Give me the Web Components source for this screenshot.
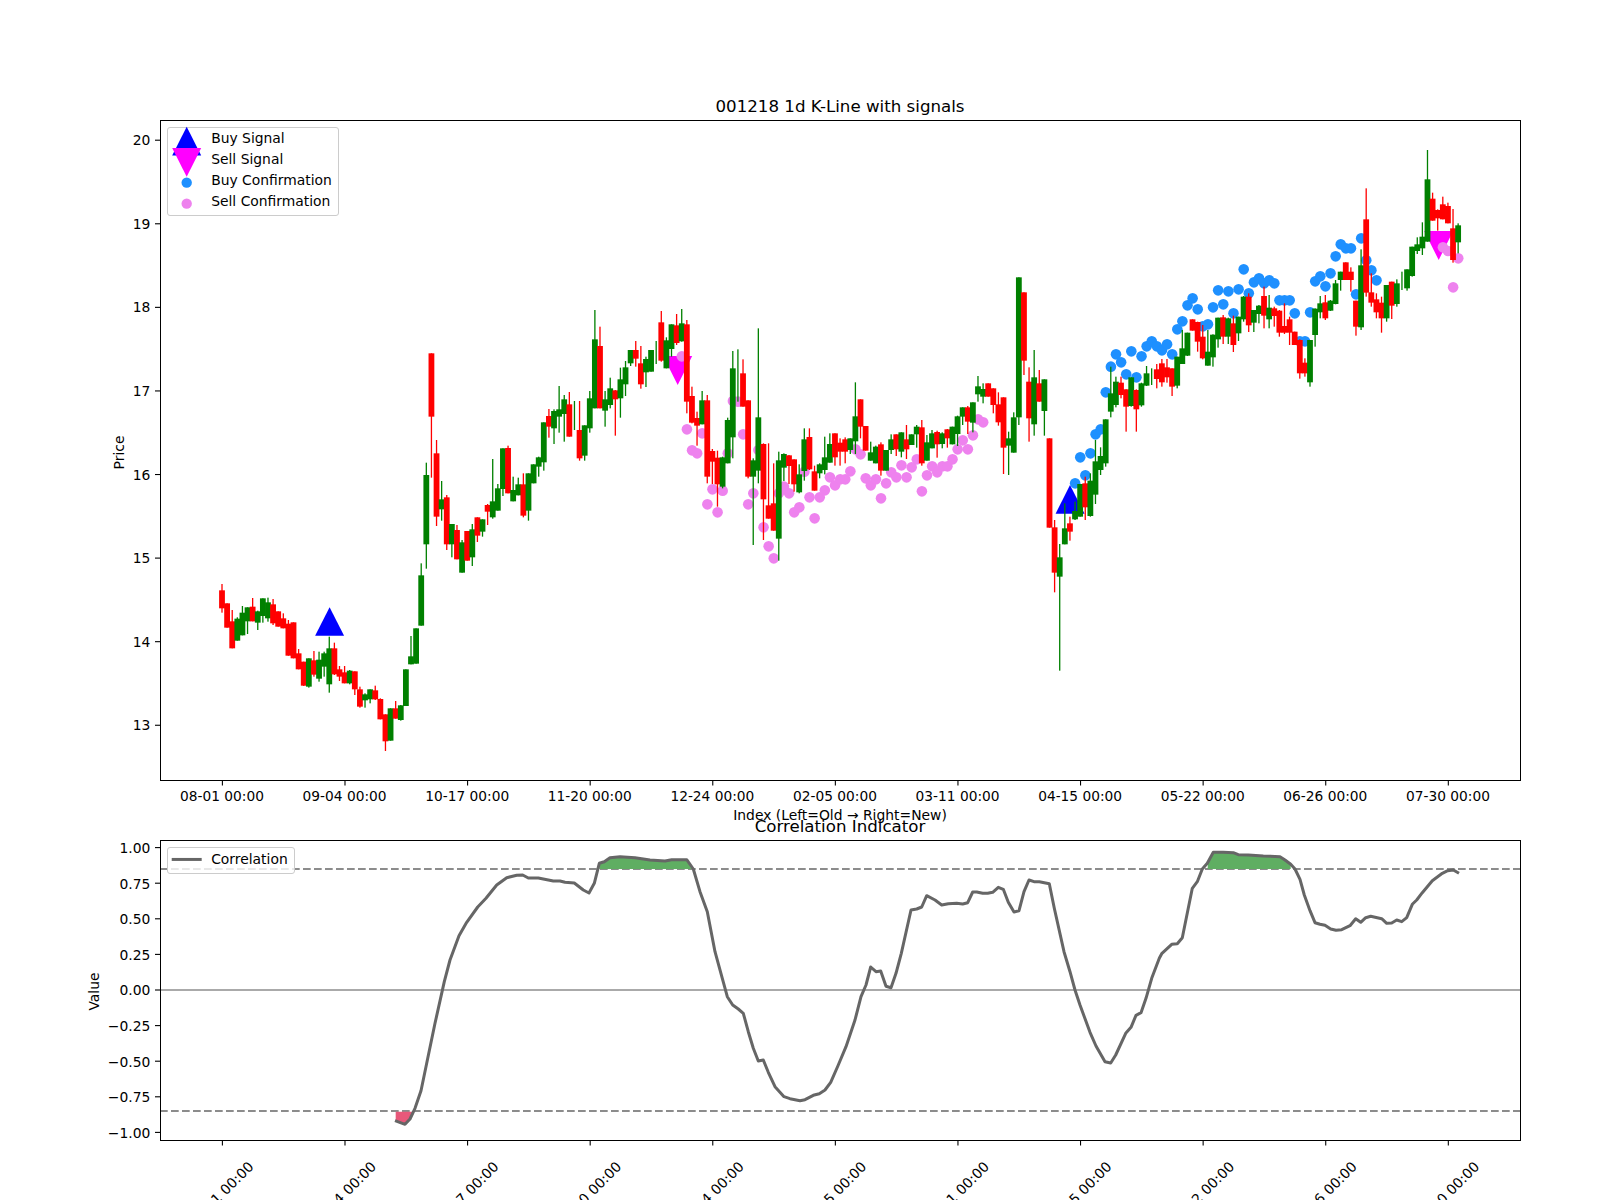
<!DOCTYPE html>
<html lang="en">
<head>
<meta charset="utf-8">
<title>001218 1d K-Line with signals</title>
<style>
html,body{margin:0;padding:0;background:#fff;font-family:"DejaVu Sans",sans-serif}
</style>
</head>
<body>
<chart-figure>
  <kline-chart>
    <chart-legend style="--lw:171.4px">
      <legend-item marker="up">Buy Signal</legend-item>
      <legend-item marker="down">Sell Signal</legend-item>
      <legend-item marker="buydot">Buy Confirmation</legend-item>
      <legend-item marker="selldot">Sell Confirmation</legend-item>
    </chart-legend>
  </kline-chart>
  <corr-chart>
    <chart-legend style="--lw:128px;--lpt:1px;--lpb:2.4px">
      <legend-item marker="line">Correlation</legend-item>
    </chart-legend>
  </corr-chart>
</chart-figure>
<script>
const BATCHES=[
[480,`r312,331,385,398;r370,370,443,443;r390,424,505,505;g412,416,482,482;g378,398,466,466;g382,382,424,462;r354,380,424,424;g392,394,428,450;g355,355,408,428;g353,367,415,425;r357,373,430,435;r394,394,440,440;r400,415,445,445;r420,431,527,527;r427,427,535,535;r507,520,568,568;r545,545,617,618;g535,535,620,623;r513,541,584,590;g515,539,596,605;g515,520,560,590;g470,505,613,638;r488,505,583,585;r558,568,590,603;r558,577,610,610;g570,572,610,613;r574,574,628,645;r620,628,680,683;g640,643,661,683;g628,628,658,670;r617,631,658,660;r655,657,718,718;r703,703,784,813;g685,685,782,782;r663,685,716,716;g675,676,720,722;g568,568,678,678;g468,529,553,553;g445,445,551,551;g250,286,437,437`],
[280,`g548,585,793,866;r220,220,410,593;r480,520,710,738;g603,658,688,722;r645,652,793,810;g732,732,793,832;r735,750,838,838;g780,787,878,878;r753,753,842,842;g732,748,832,858;r712,712,767,786;g718,718,755,770;r672,675,695,735;g537,664,712,716;g612,625,692,692;g505,505,627,648;r497,504,640,640;g590,630,664,664;g593,613,646,646;r580,613,707,712;g580,580,692,722;g553,553,610,610;g530,532,560,590;g427,427,547,572;r387,408,440,473;g388,393,445,492;g318,388,410,458;g345,358,402,485;r336,373,470,470;g363,400,400,450;r363,450,535,542;g436,436,527,542;g333,355,445,458;g90,178,385,385;r140,198,385,385;g333,358,392,440;g293,325,375,385;r330,331,358,467;g263,298,355,413;g243,262,313,348;g210,210,250,258;r183,210,236,260;r198,250,313,326;g230,237,277,321;g210,210,275,275;g183,215,215,252;r93,127,242,245;g172,181,265,265;g133,133,207,230;r102,136,189,195;g87,130,184,185;r120,133,365,400;r320,348,428,430;r395,414,437,497;g333,361,433,433;r345,361,590,610;r507,513,545,612;r512,533,613,680;g530,532,620,625;g413,420,550,550;g213,265,472,535;g208,290,290,365;r238,280,380,380;r361,361,590,595;g535,541,590,795;g145,412,572,610;r490,492,658,780;r490,676,716,716;r550,670,752,752;g515,541,776,842;g520,522,563,603;r525,526,558,612;r538,538,613,635;g553,583,637,640`],
[300,`g385,418,513,542;r385,411,508,510;r497,514,572,572;g490,493,520,535;g410,472,510,523;g400,432,488,488;r400,400,472,497;r415,428,455,497;r412,418,455,490;g415,415,450,462;g247,349,424,462;r298,298,380,415;r378,378,452,452;g425,457,482,482;g437,440,490,490;r427,433,512,527;g450,450,512,512;g403,418,450,462;r403,403,448,468;g397,397,455,472;r375,418,448,477;g403,403,435,435;g375,380,403,443;r360,382,490,497;g405,427,482,482;g390,400,445,445;r392,396,433,473;g397,400,432,445;r387,388,415,443;g380,380,433,433;g347,349,402,438;g322,322,350,375;r318,322,365,402;g307,307,368,397;g228,259,283,305;g250,267,290,310;r250,250,290,290;r265,265,315,340;r277,313,367,377;r292,292,443,522;g395,415,437,525;g337,352,458,458;g-68,-68,352,375;r-23,-23,182,225;r202,245,355,425;g150,232,373,407;r210,250,305,305;g238,238,333,407;r415,415,683,683;r660,682,818,877;g732,772,830,1112;g610,685,733,733;r650,670,695,722;g605,633,658,660;g552,552,650,650;r530,550,622,660;g520,542,648,650;g420,484,584,612`],
[140,`g922,948,990,1005;g838,838,970,980;g680,760,815,832;g710,725,795,802;r710,728,765,775;r748,748,800,875;g712,712,798,800;r748,750,808,875;g728,730,796,800;g678,700,737,738;g685,710,710,735;r672,688,717,745;r657,670,727,740;r657,682,712,728;r685,685,740,768;g650,650,737,745;g570,625,672,672;g578,578,647,648;r538,538,572,572;r545,546,605,635;r555,590,655,658;g570,635,677,677;g583,584,652,680;g533,533,598,623;r525,532,590,612;g533,535,590,612;r527,550,615,636;g530,530,580,603;g468,470,538,545;r460,470,556,576;g510,510,548,576;g495,497,522,550;r440,468,527,565;g465,503,538,565;r500,505,528,560;r510,512,578,590;r490,558,578,582;r530,538,578,615;r575,575,615,615;r598,600,700,716;r655,668,700,710;g600,600,727,740;g505,506,585,620;g468,490,517,535;r465,487,535,540;g480,482,512,513;g420,430,492,493;g395,395,420,452;r367,367,420,420;r382,395,420,455;r482,482,560,587;g328,376,562,570;r145,238,458,470;r400,457,488,500;r460,478,517,535;r470,488,535,578;g435,435,535,545;r425,425,497,537;g418,430,492,500;g395,420,420,450;g388,388,445,452;g320,320,408,410;g292,313,333,342;g247,290,325,345;g30,118,305,305;r158,176,242,242;r208,210,235,272;r170,193,238,238;r188,198,250,250;r207,265,360,368;g250,256,307,340`]
];
const PINK=[[90,229,280],[91,448,280],[92,511,280],[93,520,280],[94,460,280],[95,613],[96,568],[97,637],[98,572],[99,460],[100,303],[101,305],[102,403],[103,613],[104,580],[105,450],[106,682],[107,739],[108,775],[109,580],[110,560],[111,580],[112,637],[113,622],[114,515],[115,592],[116,655],[117,592],[118,571],[119,532],[120,556],[121,538],[122,538],[123,514],[124,448],[125,463],[126,535],[127,556],[128,538],[129,595],[130,550],[131,517],[132,532],[133,496],[134,532],[135,502],[136,478],[137,574],[138,526],[139,499],[140,517],[141,499],[142,499],[143,478],[144,448],[145,421],[146,448],[147,406],[148,358],[149,367],[239,322,140],[240,333,140],[241,442,140],[242,355,140]];
const BLUE=[[167,1030],[168,952],[169,1006],[170,940],[171,883],[172,868],[173,757],[174,680],[175,643],[176,667],[177,703],[178,634],[179,712],[180,649],[181,619],[182,604],[183,619],[184,631],[185,613],[186,643],[187,568],[188,544],[189,496],[190,475],[191,508],[192,559],[193,553],[194,502],[195,451],[196,493],[197,454],[198,520],[199,448],[200,388],[201,460],[202,427],[203,415],[204,430],[205,421],[206,430],[207,481],[208,481],[209,481],[210,520],[211,604],[212,604],[213,517],[214,424],[215,409],[216,439],[217,400],[218,349],[219,313],[220,325],[221,325],[222,463],[223,295],[224,361],[225,391],[226,421]];
const LINE_Z=[
[385,`30,827 60,838 75,822 90,790 108,737 125,655 150,535 178,410 195,345 222,272 245,232 278,186 303,160 335,120 365,98 395,91 413,90 430,99 460,99 505,108 525,108 540,112 568,114 595,135 612,144 628,115 643,55 658,50 675,38 705,35 750,38 795,45 840,48 860,44 905,44 925,72 945,140 967,200 990,320 1012,400 1027,455 1043,480 1060,492 1075,505 1090,560 1105,610 1120,648 1135,645 1150,682 1170,725`],
[760,`72,755 90,761 120,767 135,764 160,751 178,746 195,735 212,712 235,660 258,605 285,525 303,455 318,420 332,366 348,380 362,378 378,424 393,428 408,385 424,325 453,195 470,192 485,186 500,152 525,165 545,180 565,176 590,175 608,177 623,173 638,141 650,141 668,145 683,145 698,142 715,127 730,133 745,172 762,201 777,197 792,140 807,105 822,110 838,110 868,116 883,190 912,320 930,380 945,435 960,480 990,562 1008,603 1035,650 1052,654 1067,630 1097,565 1113,547 1128,511 1143,503 1158,460 1175,400`],
[1100,`178,340 185,326 215,298 232,296 247,278 277,130 292,110 307,72 322,55 340,22 370,22 400,23 415,29 445,30 490,33 540,35 555,45 572,58 585,72 600,103 613,150 630,197 645,233 660,238 675,241 692,252 708,256 725,254 750,242 767,221 782,232 797,218 812,214 845,221 860,235 875,234 890,225 905,230 920,218 937,178 950,165 967,143 997,107 1027,85 1043,77 1060,75 1077,85`]
];
const LABELS=["08-01 00:00","09-04 00:00","10-17 00:00","11-20 00:00","12-24 00:00","02-05 00:00","03-11 00:00","04-15 00:00","05-22 00:00","06-26 00:00","07-30 00:00"];
const bx=i=>222.4+5.108*i, f=n=>(+n).toFixed(2);
const tickX=LABELS.map((_,k)=>bx(24*k));
function frame(x,y,w,h){
  return `<rect x="${x+.5}" y="${y+.5}" width="${w}" height="${h}" fill="none" stroke="#000" stroke-width="1.1" shape-rendering="crispEdges"/>`;
}
function xTicks(y){
  return tickX.map(x=>`<line x1="${f(x)}" x2="${f(x)}" y1="${y}" y2="${y+5}" stroke="#000" stroke-width="1.1"/>`).join('');
}
function yTick(y,label,dy){
  return `<line x1="155" x2="160" y1="${f(y)}" y2="${f(y)}" stroke="#000" stroke-width="1.1"/><text x="150.3" y="${f(y+dy)}" text-anchor="end">${label}</text>`;
}
const AXES_CSS=`svg{display:block;overflow:visible;font:13.89px "DejaVu Sans",sans-serif;fill:#000}`;

class ChartFigure extends HTMLElement{
  constructor(){super();this.attachShadow({mode:'open'}).innerHTML=`<style>
    :host{display:flex;flex-direction:column;gap:60px;box-sizing:border-box;width:1600px;height:1200px;padding:120px 80px 60px 160px;overflow:hidden;background:#fff;color:#000;font:13.89px "DejaVu Sans",sans-serif}
  </style><slot></slot>`;}
}
class KlineChart extends HTMLElement{
  constructor(){
    super();
    let s='';
    BLUE.forEach(([i,y])=>s+=`<circle cx="${f(bx(i)-.3)}" cy="${f(140+y/3)}" r="5.3" fill="#1e90ff"/>`);
    s+=`<polygon points="329.6,607.3 344.1,635.7 315.1,635.7" fill="#0000ff"/>`;
    s+=`<polygon points="1070,485 1084.6,513.7 1055.6,513.7" fill="#0000ff"/>`;
    s+=`<polygon points="663.2,356 692.2,356 677.7,385" fill="#ff00ff"/>`;
    s+=`<polygon points="1424.2,231 1453.2,231 1438.7,260" fill="#ff00ff"/>`;
    PINK.forEach(([i,y,y0])=>{const p=(y0||300)+y/3;s+=`<circle cx="${f(bx(i)-.3)}" cy="${f(p)}" r="5.3" fill="#ee82ee"/>`;});
    let i=0;
    BATCHES.forEach(([y0,str])=>{
      str.split(';').forEach(e=>{
        const col=e[0]==='r'?'#ff0000':'#008000';
        const [wt,bt,bb,wb]=e.slice(1).split(',').map(v=>y0+(+v)/3);
        const x=bx(i)-.4;
        s+=`<rect x="${f(x-.65)}" y="${f(wt)}" width="1.3" height="${f(wb-wt)}" fill="${col}"/>`;
        if(bb>bt)s+=`<rect x="${f(x-2.9)}" y="${f(bt)}" width="5.8" height="${f(bb-bt)}" fill="${col}"/>`;
        i++;
      });
    });
    let t=frame(160,120,1360,660)+xTicks(780.5);
    for(let p=13;p<=20;p++)t+=yTick(140.2+(20-p)*83.58,p,5.05);
    tickX.forEach((x,k)=>t+=`<text x="${f(x-.4)}" y="801.3" text-anchor="middle" font-size="13.75">${LABELS[k]}</text>`);
    t+=`<text x="840" y="111.7" text-anchor="middle" font-size="16.67">001218 1d K-Line with signals</text>`;
    t+=`<text x="840" y="819.5" text-anchor="middle">Index (Left=Old → Right=New)</text>`;
    t+=`<text transform="translate(123.5 452.5) rotate(-90)" text-anchor="middle">Price</text>`;
    this.attachShadow({mode:'open'}).innerHTML=`<style>:host{display:block;position:relative;height:660px}${AXES_CSS}</style>
      <svg width="1360" height="660" viewBox="160 120 1360 660">${s}${t}</svg><slot></slot>`;
  }
}
class CorrChart extends HTMLElement{
  constructor(){
    super();
    const pts=[];
    LINE_Z.forEach(([x0,str])=>str.split(' ').forEach(p=>{const [x,y]=p.split(',').map(Number);pts.push([x0+x/3,845+y/3]);}));
    const line=pts.map(p=>p[0].toFixed(1)+','+p[1].toFixed(1)).join(' ');
    const Y=v=>990-142.4*v;
    const red=[[385+32/3,845+800/3],[385+85/3,845+800/3],[385+75/3,845+822/3],[385+60/3,845+838/3],[385+32/3,845+828/3]];
    const g1=[[385+643/3,869]].concat(pts.filter(p=>p[0]>=385+643/3&&p[0]<=385+925/3&&p[1]<869)).concat([[385+920/3,869]]);
    const g2=[[1100+323/3,869],[1100+323/3,845+55/3]].concat(pts.filter(p=>p[0]>1100+323/3&&p[0]<1100+585/3)).concat([[1100+572/3,869]]);
    const poly=(a,c)=>`<polygon points="${a.map(p=>p[0].toFixed(1)+','+p[1].toFixed(1)).join(' ')}" fill="${c}"/>`;
    let s=`<line x1="160" x2="1520" y1="990" y2="990" stroke="#aaa" stroke-width="2.2"/>`;
    s+=`<line x1="160" x2="1520" y1="869" y2="869" stroke="#8c8c8c" stroke-width="2.2" stroke-dasharray="7.7 3.3"/>`;
    s+=`<line x1="160" x2="1520" y1="1111" y2="1111" stroke="#8c8c8c" stroke-width="2.2" stroke-dasharray="7.7 3.3"/>`;
    s+=poly(red,'#e8587a')+poly(g1,'#5fae62')+poly(g2,'#5fae62');
    s+=`<polyline points="${line}" fill="none" stroke="#666" stroke-width="3" stroke-linejoin="round"/>`;
    let t=frame(160,840,1360,300)+xTicks(1140.5);
    for(let k=-4;k<=4;k++){const v=k*.25;t+=yTick(Y(v),(v<0?'\u2212':'')+Math.abs(v).toFixed(2),5.4);}
    tickX.forEach((x,k)=>t+=`<text transform="translate(${f(x-1.5)} 1194) rotate(-45)" y="5" text-anchor="middle">${LABELS[k]}</text>`);
    t+=`<text x="840" y="831.7" text-anchor="middle" font-size="16.67">Correlation Indicator</text>`;
    t+=`<text transform="translate(98.8 991.5) rotate(-90)" text-anchor="middle">Value</text>`;
    this.attachShadow({mode:'open'}).innerHTML=`<style>:host{display:block;position:relative;height:300px}${AXES_CSS}</style>
      <svg width="1360" height="300" viewBox="160 840 1360 300">${s}${t}</svg><slot></slot>`;
  }
}
class ChartLegend extends HTMLElement{
  constructor(){super();this.attachShadow({mode:'open'}).innerHTML=`<style>
    :host{position:absolute;left:7.4px;top:7.4px;display:flex;flex-direction:column;box-sizing:border-box;width:var(--lw);padding:var(--lpt,0) 0 var(--lpb,3.4px) 4.8px;background:rgba(255,255,255,.8);border:1px solid #ccc;border-radius:3px}
  </style><slot></slot>`;}
}
const MARKERS={
  up:`<polygon points="0,-11.75 14.5,16.95 -14.5,16.95" fill="#00f"/>`,
  down:`<polygon points="-14.5,-11.35 14.5,-11.35 0,17.35" fill="#f0f"/>`,
  buydot:`<circle cx="0" cy="2.2" r="5.2" fill="#1e90ff"/>`,
  selldot:`<circle cx="0" cy="2.2" r="5.2" fill="#ee82ee"/>`,
  line:`<line x1="-15" x2="15" y1="0" y2="0" stroke="#666" stroke-width="3"/>`
};
class LegendItem extends HTMLElement{
  constructor(){super();this.attachShadow({mode:'open'});}
  connectedCallback(){
    this.shadowRoot.innerHTML=`<style>
      :host{display:flex;align-items:center;height:20.9px;font:13.89px/20.9px "DejaVu Sans",sans-serif;color:#000;white-space:nowrap}
      svg{flex:none;overflow:visible;margin-right:10.6px}
    </style><svg width="27.4" height="20.9" viewBox="-13.7 -10.45 27.4 20.9">${MARKERS[this.getAttribute('marker')]||''}</svg><slot></slot>`;
  }
}
customElements.define('chart-figure',ChartFigure);
customElements.define('kline-chart',KlineChart);
customElements.define('corr-chart',CorrChart);
customElements.define('chart-legend',ChartLegend);
customElements.define('legend-item',LegendItem);
</script>
</body>
</html>
